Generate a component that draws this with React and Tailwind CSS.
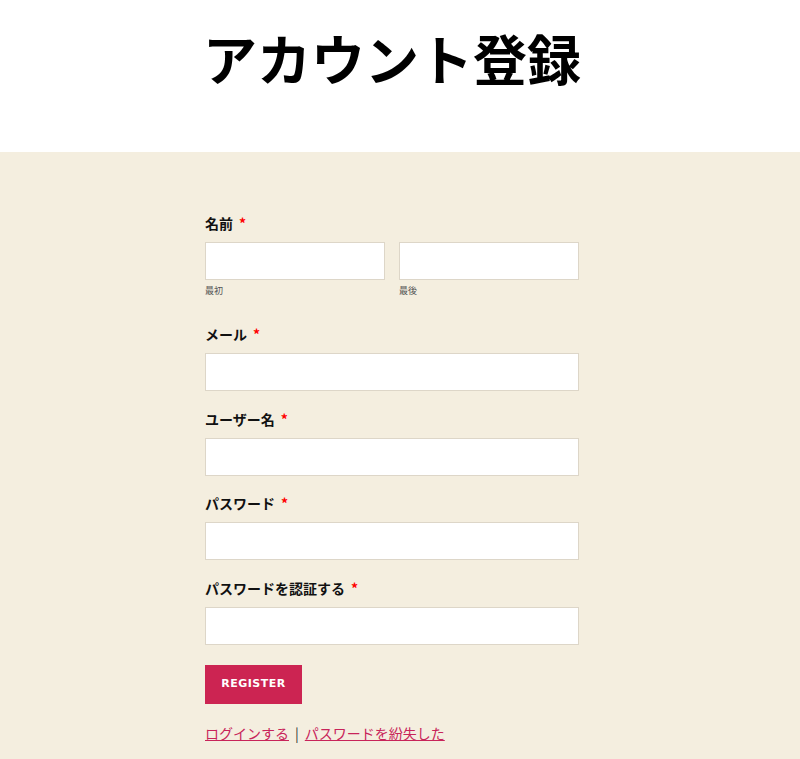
import React from "react";

const font = { fontFamily: '"Noto Sans CJK JP", "Noto Sans", sans-serif' };

function Label({ children }) {
  return (
    <div className="h-[20px] leading-[19px] text-[14px] font-bold text-[#111] mb-[8px]">
      {children}
      <span className="text-[#ff0000] ml-[6px]">*</span>
    </div>
  );
}

function Input({ className = "" }) {
  return (
    <input
      type="text"
      className={"block h-[38px] bg-white border border-[#ddd6c8] outline-none " + className}
    />
  );
}

export default function App() {
  return (
    <div className="min-h-[759px] bg-white" style={font}>
      <div className="h-[152px] pl-[203px] pt-[20px]">
        <h1 className="text-[54px] leading-[76px] font-bold text-black">
          アカウント登録
        </h1>
      </div>
      <div className="bg-[#f4eedf] pl-[205px] pt-[62px] pb-[20px]">
        <div className="w-[374px] flex flex-col">
          <Label>名前</Label>
          <div className="flex gap-[14px]">
            <div className="flex flex-col w-[180px]">
              <Input className="w-[180px]" />
              <div className="text-[9px] leading-[12px] text-[#555] mt-[5px]">最初</div>
            </div>
            <div className="flex flex-col w-[180px]">
              <Input className="w-[180px]" />
              <div className="text-[9px] leading-[12px] text-[#555] mt-[5px]">最後</div>
            </div>
          </div>
          <div className="mt-[28px]">
            <Label>メール</Label>
            <Input className="w-[374px]" />
          </div>
          <div className="mt-[19px]">
            <Label>ユーザー名</Label>
            <Input className="w-[374px]" />
          </div>
          <div className="mt-[18px]">
            <Label>パスワード</Label>
            <Input className="w-[374px]" />
          </div>
          <div className="mt-[19px]">
            <Label>パスワードを認証する</Label>
            <Input className="w-[374px]" />
          </div>
          <div className="mt-[20px]">
            <button className="w-[97px] h-[39px] bg-[#cc2452] text-white text-[11px] font-bold tracking-[0.5px]" style={{ fontFamily: '"DejaVu Sans", Verdana, sans-serif' }}>
              REGISTER
            </button>
          </div>
          <div className="mt-[19px] text-[14px] leading-[20px] text-[#333]">
            <a href="#" className="text-[#c8245a] underline">ログインする</a>
            <span className="mx-[6px]">|</span>
            <a href="#" className="text-[#c8245a] underline">パスワードを紛失した</a>
          </div>
        </div>
      </div>
    </div>
  );
}
